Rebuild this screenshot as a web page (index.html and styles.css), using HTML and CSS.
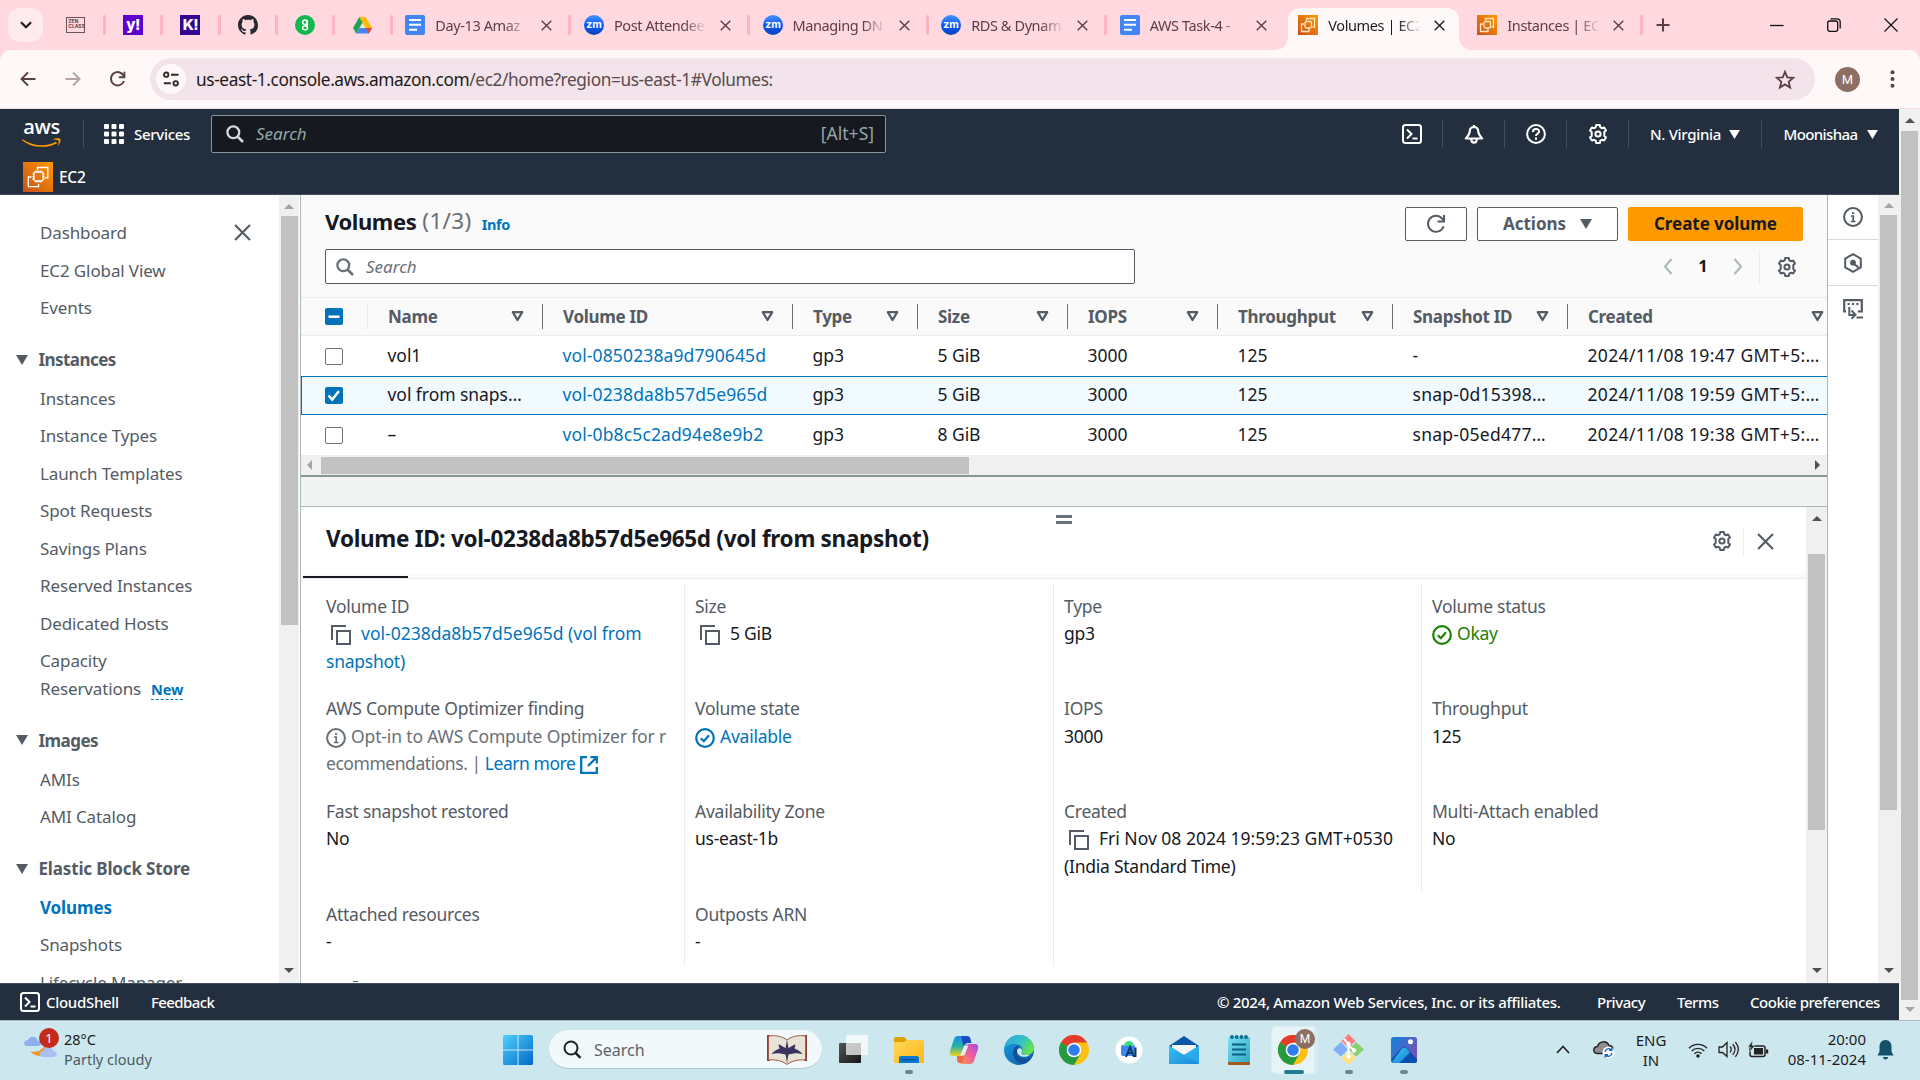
FILE: index.html
```html
<!DOCTYPE html>
<html lang="en">
<head>
<meta charset="utf-8">
<title>Volumes | EC2 | us-east-1</title>
<link rel="stylesheet" href="styles.css">
</head>
<body>
<svg class="defs" width="0" height="0">
  <defs>
    <linearGradient id="gEc2" x1="0" y1="1" x2="1" y2="0"><stop offset="0" stop-color="#c8511b"/><stop offset="1" stop-color="#ff9900"/></linearGradient>
    <linearGradient id="gZm" x1="0" y1="0" x2="0" y2="1"><stop offset="0" stop-color="#4a94ff"/><stop offset=".5" stop-color="#0b5cff"/><stop offset="1" stop-color="#0842b8"/></linearGradient>
    <linearGradient id="gWin" x1="0" y1="0" x2="1" y2="1"><stop offset="0" stop-color="#4fd0fb"/><stop offset="1" stop-color="#0068cc"/></linearGradient>
    <linearGradient id="gFold" x1="0" y1="0" x2="1" y2="1"><stop offset="0" stop-color="#ffd75e"/><stop offset="1" stop-color="#fcb813"/></linearGradient>
    <linearGradient id="gCopA" x1="0" y1="0" x2="0" y2="1"><stop offset="0" stop-color="#1a8fe8"/><stop offset=".5" stop-color="#22b0a8"/><stop offset="1" stop-color="#f2d31b"/></linearGradient>
    <linearGradient id="gCopB" x1="1" y1="0" x2="0" y2="1"><stop offset="0" stop-color="#a349e8"/><stop offset=".5" stop-color="#f0609a"/><stop offset="1" stop-color="#fb9a4a"/></linearGradient>
    <linearGradient id="gEdgeA" x1="0" y1="0" x2="1" y2=".5"><stop offset="0" stop-color="#2aa4dc"/><stop offset=".6" stop-color="#35c1c4"/><stop offset="1" stop-color="#66e24e"/></linearGradient>
    <linearGradient id="gEdgeB" x1="0" y1="0" x2="1" y2="1"><stop offset="0" stop-color="#1b9de2"/><stop offset="1" stop-color="#0c59a4"/></linearGradient>
    <linearGradient id="gMail" x1="0" y1="0" x2="1" y2="1"><stop offset="0" stop-color="#35c3f2"/><stop offset="1" stop-color="#1a86d8"/></linearGradient>
    <linearGradient id="gPad" x1="0" y1="0" x2="1" y2="1"><stop offset="0" stop-color="#7be0f2"/><stop offset="1" stop-color="#2fa9c9"/></linearGradient>
    <linearGradient id="gPhoto" x1="0" y1="0" x2="1" y2=".6"><stop offset="0" stop-color="#0f84dc"/><stop offset="1" stop-color="#7352b8"/></linearGradient>
    <linearGradient id="gHill" x1="0" y1="0" x2="1" y2="1"><stop offset="0" stop-color="#3fd0f5"/><stop offset="1" stop-color="#1279d4"/></linearGradient>
    <linearGradient id="gTask" x1="0" y1="0" x2="1" y2="1"><stop offset="0" stop-color="#555"/><stop offset="1" stop-color="#161616"/></linearGradient>
  </defs>
  <symbol id="close" viewBox="0 0 16 16"><path d="M1 1l14 14M15 1L1 15" fill="none" stroke="currentColor" stroke-width="2"/></symbol>
  <symbol id="ec2" viewBox="0 0 30 30"><path d="M0 0h30v30H0z" fill="url(#gEc2)"/><g fill="none" stroke="#fff" stroke-width="1.300"><path d="M14.500 8V5.500h10.300v10.300h-3M8.500 15H5.300v9.700h10.300V22"/><rect x="11" y="10" width="9" height="9" rx="1.500"/><path d="M13 8.500V10M15.500 8.500V10M18 8.500V10M13 19V20.500M15.500 19V20.500M18 19V20.500M9.500 12.200H11M9.500 14.700H11M9.500 17H11M20 12.200H21.500M20 14.700H21.500M20 17H21.500"/></g></symbol>
  <symbol id="ec2s" viewBox="0 0 20 20"><path d="M0 0h20v20H0z" fill="url(#gEc2)"/><g fill="none" stroke="#ffe6c7" stroke-width="1.300"><path d="M8.500 5.500V3.500h8v8.500h-2M6 9H3.500v7.500h7.500V14"/><rect x="7" y="6.500" width="6.500" height="6.500" rx="1.500"/></g></symbol>
  <symbol id="docs" viewBox="0 0 20 20"><rect width="20" height="20" rx="2" fill="#4285f4"/><path d="M4 5h12M4 9.800h12M4 14.800h8" stroke="#fff" stroke-width="1.900"/></symbol>
  <symbol id="zm" viewBox="0 0 20 20"><circle cx="10" cy="10" r="10" fill="url(#gZm)"/><text x="10" y="13.300" text-anchor="middle" font-size="10.500" font-weight="700" fill="#fff" font-family="Inter, sans-serif">zm</text></symbol>
  <symbol id="gear" viewBox="0 0 20 20"><g fill="none" stroke="currentColor" stroke-width="2" stroke-linejoin="round"><path d="M8.200 1h3.600l.5 2.300 1.600.9 2.200-.8 1.900 3.100-1.700 1.600v3.800l1.700 1.600-1.900 3.100-2.200-.8-1.600.9-.5 2.300H8.200l-.5-2.300-1.600-.9-2.200.8L2 13.500l1.700-1.600V8.100L2 6.500l1.900-3.100 2.200.8 1.600-.9z"/><circle cx="10" cy="10" r="2.600"/></g></symbol>
  <symbol id="shell" viewBox="0 0 20 20"><rect x="1" y="1" width="18" height="18" rx="2.500" fill="none" stroke="currentColor" stroke-width="2"/><path d="M5 5.500l4.500 4.500L5 14.500M10.500 14.500h5" fill="none" stroke="currentColor" stroke-width="2"/></symbol>
  <symbol id="search" viewBox="0 0 18 18"><circle cx="7.300" cy="7.300" r="5.900" fill="none" stroke="currentColor" stroke-width="2.300"/><path d="M11.500 11.500l5.500 5.500" stroke="currentColor" stroke-width="2.500"/></symbol>
  <symbol id="copy" viewBox="0 0 20 20"><path d="M1 15V1h14" fill="none" stroke="currentColor" stroke-width="2"/><rect x="6" y="6" width="13" height="13" fill="none" stroke="currentColor" stroke-width="2"/></symbol>
  <symbol id="okc" viewBox="0 0 20 20"><circle cx="10" cy="10" r="8.800" fill="none" stroke="currentColor" stroke-width="2.200"/><path d="M5.800 10.200l3 3 5.200-5.900" fill="none" stroke="currentColor" stroke-width="2.200"/></symbol>
  <symbol id="info" viewBox="0 0 20 20"><circle cx="10" cy="10" r="8.900" fill="none" stroke="currentColor" stroke-width="2"/><path d="M8 9h2.200v5.500M7.800 14.500h4.700M9 6.200h2.200" fill="none" stroke="currentColor" stroke-width="1.700"/></symbol>
  <symbol id="sort" viewBox="0 0 13 11"><path d="M1.800 1.200h9.400L6.500 9z" fill="none" stroke="currentColor" stroke-width="2.300" stroke-linejoin="round"/></symbol>
  <symbol id="down" viewBox="0 0 12 10"><path d="M0 0h12L6 10z" fill="currentColor"/></symbol>
  <symbol id="reload" viewBox="0 0 20 20"><path d="M17.600 12.200A8 8 0 1 1 16 4.500L17.500 6" fill="none" stroke="currentColor" stroke-width="2"/><path d="M18 1v6.500h-6.500" fill="none" stroke="currentColor" stroke-width="2"/></symbol>
  <symbol id="chrome" viewBox="0 0 30 30"><circle cx="15" cy="15" r="15" fill="#fbc116"/><path d="M15 15L2 7.500A15 15 0 0 1 28 7.500H15z" fill="#e33b2e"/><path d="M2 7.500A15 15 0 0 0 15 30l6.500-11.200L15 15z" fill="#249a41"/><circle cx="15" cy="15" r="7.300" fill="#fff"/><circle cx="15" cy="15" r="5.800" fill="#2f7cf0"/></symbol>
</svg>

<header class="tabstrip">
  <div class="tabmenu"><svg width="12" height="8" viewBox="0 0 12 8"><path d="M1 1.200l5 5 5-5" fill="none" stroke="#1f1a1b" stroke-width="2.200"/></svg></div>
  <div class="pin"><div class="zen">ZEN<br>CLASS</div></div>
  <div class="pin"><div class="fav yahoo">y!</div></div>
  <div class="pin"><div class="fav kahoot">K!</div></div>
  <div class="pin"><svg width="20" height="20" viewBox="0 0 16 16"><path fill="#24292f" d="M8 0C3.580 0 0 3.580 0 8c0 3.540 2.290 6.530 5.470 7.590.4.070.55-.17.55-.38 0-.19-.01-.82-.01-1.490-2.010.37-2.530-.49-2.690-.94-.09-.23-.48-.94-.82-1.130-.28-.15-.68-.52-.01-.53.63-.01 1.080.58 1.230.82.72 1.210 1.870.87 2.330.66.070-.52.28-.87.51-1.070-1.780-.2-3.640-.89-3.640-3.950 0-.87.31-1.590.82-2.150-.08-.2-.36-1.020.080-2.120 0 0 .67-.21 2.200.82.640-.18 1.320-.27 2-.27s1.360.09 2 .27c1.530-1.040 2.200-.82 2.200-.82.44 1.100.16 1.920.080 2.120.51.56.82 1.270.82 2.150 0 3.070-1.870 3.750-3.650 3.950.29.25.54.73.54 1.480 0 1.070-.01 1.930-.01 2.200 0 .21.15.46.55.38A8 8 0 0 0 16 8c0-4.420-3.580-8-8-8z"/></svg></div>
  <div class="pin"><svg width="20" height="20" viewBox="0 0 20 20"><circle cx="10" cy="10" r="10" fill="#12b84e"/><g fill="none" stroke="#fff" stroke-width="1.500"><circle cx="10" cy="7.300" r="2.300"/><path d="M12.300 5v5.500c-2 .3-4.800.3-4.800 2.500s5 2.300 5 0c0-1-.8-1.600-1.600-1.800"/></g></svg></div>
  <div class="pin"><svg width="19" height="17" viewBox="0 0 19 17"><path d="M6.300 0h6.400L19 11h-6.300z" fill="#fbbc04"/><path d="M6.300 0L0 11l3.200 5.600L9.500 5.500z" fill="#25a352"/><path d="M3.200 16.600h12.600L19 11H6.400z" fill="#4486f5"/><path d="M15.800 16.600L19 11h-6.300z" fill="#ea4335"/></svg></div>
  <div class="tab"><svg class="fi"><use href="#docs"/></svg><span class="tt">Day-13 Amaz</span><svg class="tx"><use href="#close"/></svg></div>
  <div class="tab"><svg class="fi"><use href="#zm"/></svg><span class="tt">Post Attendee</span><svg class="tx"><use href="#close"/></svg></div>
  <div class="tab"><svg class="fi"><use href="#zm"/></svg><span class="tt">Managing DN</span><svg class="tx"><use href="#close"/></svg></div>
  <div class="tab"><svg class="fi"><use href="#zm"/></svg><span class="tt">RDS &amp; Dynam</span><svg class="tx"><use href="#close"/></svg></div>
  <div class="tab nosep"><svg class="fi"><use href="#docs"/></svg><span class="tt">AWS Task-4 -</span><svg class="tx"><use href="#close"/></svg></div>
  <div class="tab nosep active"><svg class="fi"><use href="#ec2s"/></svg><span class="tt">Volumes | EC2</span><svg class="tx"><use href="#close"/></svg></div>
  <div class="tab"><svg class="fi"><use href="#ec2s"/></svg><span class="tt">Instances | EC</span><svg class="tx"><use href="#close"/></svg></div>
  <svg class="plus" width="14" height="14" viewBox="0 0 14 14"><path d="M7 .5v13M.5 7h13" stroke="#5b3f46" stroke-width="2"/></svg>
  <div class="winctl">
    <svg width="14" height="14" viewBox="0 0 14 14"><path d="M0 7.500h13.500" stroke="#111" stroke-width="1.300"/></svg>
    <svg width="14" height="14" viewBox="0 0 14 14"><g fill="none" stroke="#111" stroke-width="1.300"><rect x=".7" y="3" width="10" height="10.300" rx="2"/><path d="M3.500.8h6.500a3.200 3.200 0 0 1 3.200 3.200v6.500"/></g></svg>
    <svg width="14" height="14" viewBox="0 0 14 14"><path d="M.5.5l13 13M13.500.5l-13 13" stroke="#111" stroke-width="1.200"/></svg>
  </div>
</header>

<div class="toolbar-bg"><div class="toolbar">
  <svg width="16" height="16" viewBox="0 0 16 16"><path d="M15.500 8H2M8 1.500L1.500 8 8 14.500" fill="none" stroke="#5b3f46" stroke-width="1.900"/></svg>
  <svg width="16" height="16" viewBox="0 0 16 16"><path d="M.5 8H14M8 1.500L14.500 8 8 14.500" fill="none" stroke="#b3a3a7" stroke-width="1.900"/></svg>
  <svg width="16" height="16" viewBox="0 0 16 16"><path d="M14 10A6.700 6.700 0 1 1 13.800 5" fill="none" stroke="#5b3f46" stroke-width="1.900"/><path d="M14.400.7v5.600H8.800" fill="none" stroke="#5b3f46" stroke-width="1.900"/></svg>
  <div class="omni">
    <div class="site"><svg width="16" height="16" viewBox="0 0 16 16"><g fill="none" stroke="#33272a" stroke-width="1.900"><circle cx="3.200" cy="3.700" r="2.200"/><path d="M8 3.700h7.500M.8 12.300h7"/><circle cx="12.700" cy="12.300" r="2.200"/></g></svg></div>
    <span class="url"><b>us-east-1.console.aws.amazon.com</b>/ec2/home?region=us-east-1#Volumes:</span>
    <svg class="star" width="20" height="19" viewBox="0 0 20 19"><path d="M10 1.800l2.300 5.500 5.900.5-4.500 3.900 1.400 5.800-5.100-3.100-5.100 3.100 1.400-5.800L1.800 7.800l5.900-.5z" fill="none" stroke="#5b3f46" stroke-width="1.800"/></svg>
  </div>
  <div class="avatar">M</div>
  <svg width="5" height="18" viewBox="0 0 5 18"><g fill="#5b3f46"><circle cx="2.500" cy="2.300" r="2"/><circle cx="2.500" cy="9" r="2"/><circle cx="2.500" cy="15.700" r="2"/></g></svg>
</div></div>

<div class="viewport">
<div class="console">
  <nav class="aws">
    <div class="row1">
      <div class="logo"><span>aws</span><svg width="39" height="9" viewBox="0 0 39 9"><path d="M.5 1.200C11 8.500 25 9 34 3.800l1 1.400C26 10.500 9 10.500 0 1.900z" fill="#f90"/><path d="M30.500 1.600C33 0 37 0 38.300.8c.8 1.500-.3 5.400-2.700 7.200.6-2 1.600-4.200.9-5.500-1-.8-4-.6-6-.9z" fill="#f90"/></svg></div>
      <i class="vd v1"></i>
      <svg width="20" height="20" viewBox="0 0 20 20" fill="#fff"><rect width="5" height="5" rx="1"/><rect x="7.500" width="5" height="5" rx="1"/><rect x="15" width="5" height="5" rx="1"/><rect y="7.500" width="5" height="5" rx="1"/><rect x="7.500" y="7.500" width="5" height="5" rx="1"/><rect x="15" y="7.500" width="5" height="5" rx="1"/><rect y="15" width="5" height="5" rx="1"/><rect x="7.500" y="15" width="5" height="5" rx="1"/><rect x="15" y="15" width="5" height="5" rx="1"/></svg>
      <span class="nt services">Services</span>
      <div class="nsearch"><svg width="18" height="18"><use href="#search"/></svg><em>Search</em><span>[Alt+S]</span></div>
      <div class="nright">
        <div class="cell"><svg width="20" height="20"><use href="#shell"/></svg></div>
        <div class="cell"><svg width="20" height="20" viewBox="0 0 20 20"><path d="M10 1v2M10 2.800a4.300 4.300 0 0 0-4.200 4.300c0 3-2.200 5.400-4 7.400h16.400c-1.800-2-4-4.400-4-7.400A4.300 4.300 0 0 0 10 2.800zM7.300 15.500c0 4.200 5.400 4.200 5.400 0" fill="none" stroke="#fff" stroke-width="2.200" stroke-linejoin="round"/></svg></div>
        <div class="cell"><svg width="20" height="20" viewBox="0 0 20 20"><circle cx="10" cy="10" r="8.900" fill="none" stroke="#fff" stroke-width="2"/><path d="M6.900 7.900c0-4 6.200-3.900 6.200-.4 0 2.200-3.100 2-3.100 4.500M10 13.500v2.200" fill="none" stroke="#fff" stroke-width="2"/></svg></div>
        <div class="cell"><svg width="20" height="20"><use href="#gear"/></svg></div>
        <div class="cell region"><span class="nt t-reg">N. Virginia</span><svg width="11" height="9"><use href="#down"/></svg></div>
        <div class="cell user"><span class="nt t-usr">Moonishaa</span><svg width="11" height="9"><use href="#down"/></svg></div>
      </div>
    </div>
    <div class="row2"><svg width="30" height="30"><use href="#ec2"/></svg><span class="nt t-ec2">EC2</span></div>
  </nav>

  <div class="body">
    <aside class="side">
      <div class="links">
        <div class="lk"><span>Dashboard</span><svg class="sclose" width="17" height="17"><use href="#close"/></svg></div>
        <div class="lk">EC2 Global View</div>
        <div class="lk">Events</div>
        <div class="hd short"><svg width="12" height="10"><use href="#down"/></svg><span>Instances</span></div>
        <div class="lk">Instances</div>
        <div class="lk">Instance Types</div>
        <div class="lk">Launch Templates</div>
        <div class="lk">Spot Requests</div>
        <div class="lk">Savings Plans</div>
        <div class="lk">Reserved Instances</div>
        <div class="lk">Dedicated Hosts</div>
        <div class="lk two"><span>Capacity<br>Reservations</span><b class="new">New</b></div>
        <div class="hd short"><svg width="12" height="10"><use href="#down"/></svg><span>Images</span></div>
        <div class="lk">AMIs</div>
        <div class="lk">AMI Catalog</div>
        <div class="hd"><svg width="12" height="10"><use href="#down"/></svg><span>Elastic Block Store</span></div>
        <div class="lk on">Volumes</div>
        <div class="lk">Snapshots</div>
        <div class="lk">Lifecycle Manager</div>
      </div>
      <div class="sb sb-side"><i class="up off"></i><b></b><i class="dn"></i></div>
    </aside>

    <main class="main">
      <section class="list">
        <div class="lhead">
          <h1>Volumes</h1><span class="cnt">(1/3)</span><span class="inf">Info</span>
          <div class="btns">
            <div class="btn ref"><svg width="20" height="20"><use href="#reload"/></svg></div>
            <div class="btn act"><span>Actions</span><svg width="12" height="10"><use href="#down"/></svg></div>
            <div class="btn create"><span>Create volume</span></div>
          </div>
        </div>
        <div class="lfilter">
          <div class="filter"><svg width="18" height="18"><use href="#search"/></svg><em>Search</em></div>
          <div class="pager">
            <svg width="10" height="17" viewBox="0 0 10 17"><path d="M8.500 1L2 8.500 8.500 16" fill="none" stroke="#aab7b8" stroke-width="2"/></svg>
            <b>1</b>
            <svg width="10" height="17" viewBox="0 0 10 17"><path d="M1.500 1L8 8.500 1.500 16" fill="none" stroke="#aab7b8" stroke-width="2"/></svg>
            <i></i>
            <svg class="pg" width="20" height="20"><use href="#gear"/></svg>
          </div>
        </div>
        <div class="tr th">
          <div class="ck"><span class="box full"><svg width="18" height="17" viewBox="0 0 18 17"><path d="M3.500 8.700h11" stroke="#fff" stroke-width="2.500"/></svg></span></div>
          <div class="c"><span>Name</span><svg width="13" height="11"><use href="#sort"/></svg></div>
          <div class="c"><span>Volume ID</span><svg width="13" height="11"><use href="#sort"/></svg></div>
          <div class="c"><span>Type</span><svg width="13" height="11"><use href="#sort"/></svg></div>
          <div class="c"><span>Size</span><svg width="13" height="11"><use href="#sort"/></svg></div>
          <div class="c"><span>IOPS</span><svg width="13" height="11"><use href="#sort"/></svg></div>
          <div class="c"><span>Throughput</span><svg width="13" height="11"><use href="#sort"/></svg></div>
          <div class="c"><span>Snapshot ID</span><svg width="13" height="11"><use href="#sort"/></svg></div>
          <div class="c"><span>Created</span><svg width="13" height="11"><use href="#sort"/></svg></div>
        </div>
        <div class="tr"><div class="ck"><span class="box"></span></div><div class="d">vol1</div><div class="d a">vol-0850238a9d790645d</div><div class="d">gp3</div><div class="d">5 GiB</div><div class="d">3000</div><div class="d">125</div><div class="d">-</div><div class="d date">2024/11/08 19:47 GMT+5:…</div></div>
        <div class="tr sel"><div class="ck"><span class="box full"><svg width="18" height="17" viewBox="0 0 18 17"><path d="M3.500 8.500l3.700 4L14 4" fill="none" stroke="#fff" stroke-width="2.500"/></svg></span></div><div class="d">vol from snaps…</div><div class="d a">vol-0238da8b57d5e965d</div><div class="d">gp3</div><div class="d">5 GiB</div><div class="d">3000</div><div class="d">125</div><div class="d snap">snap-0d15398…</div><div class="d date">2024/11/08 19:59 GMT+5:…</div></div>
        <div class="tr"><div class="ck"><span class="box"></span></div><div class="d">–</div><div class="d a">vol-0b8c5c2ad94e8e9b2</div><div class="d">gp3</div><div class="d">8 GiB</div><div class="d">3000</div><div class="d">125</div><div class="d snap">snap-05ed477…</div><div class="d date">2024/11/08 19:38 GMT+5:…</div></div>
        <div class="hsb"><i class="lf"></i><b></b><i class="rt"></i></div>
      </section>
      <div class="gap"></div>
      <section class="split">
        <div class="scontent">
          <div class="shead">
            <div class="handle"></div>
            <h2>Volume ID: vol-0238da8b57d5e965d (vol from snapshot)</h2>
            <div class="sact"><svg width="20" height="20"><use href="#gear"/></svg><i></i><svg width="17" height="17"><use href="#close"/></svg></div>
          </div>
          <div class="tabsline"><i></i></div>
          <div class="cols">
            <div class="col">
              <div class="f"><label>Volume ID</label><p class="a"><svg class="cp" width="20" height="20"><use href="#copy"/></svg><span class="wide">vol-0238da8b57d5e965d (vol from</span><br>snapshot)</p></div>
              <div class="f"><label>AWS Compute Optimizer finding</label><p class="g"><svg class="ic" width="20" height="20"><use href="#info"/></svg><span class="mid">Opt-in to AWS Compute Optimizer for r</span><br><span class="tight">ecommendations. | </span><span class="a tight">Learn more</span><svg class="ext" width="18" height="18" viewBox="0 0 18 18"><path d="M7 1.200H1.200v15.600h15.600V11M10.500 1.200h6.300v6.300M16.500 1.500L8 10" fill="none" stroke="currentColor" stroke-width="2.300"/></svg></p></div>
              <div class="f"><label>Fast snapshot restored</label><p>No</p></div>
              <div class="f last"><label>Attached resources</label><p>-</p></div>
            </div>
            <div class="col">
              <div class="f"><label>Size</label><p><svg class="cp" width="20" height="20"><use href="#copy"/></svg>5 GiB</p></div>
              <div class="f"><label>Volume state</label><p class="a"><svg class="ic" width="20" height="20"><use href="#okc"/></svg>Available</p></div>
              <div class="f"><label>Availability Zone</label><p>us-east-1b</p></div>
              <div class="f last"><label>Outposts ARN</label><p>-</p></div>
            </div>
            <div class="col">
              <div class="f"><label>Type</label><p>gp3</p></div>
              <div class="f"><label>IOPS</label><p>3000</p></div>
              <div class="f last"><label>Created</label><p><svg class="cp" width="20" height="20"><use href="#copy"/></svg><span class="wide">Fri Nov 08 2024 19:59:23 GMT+0530</span><br>(India Standard Time)</p></div>
            </div>
            <div class="col short">
              <div class="f"><label>Volume status</label><p class="ok"><svg class="ic" width="20" height="20"><use href="#okc"/></svg>Okay</p></div>
              <div class="f"><label>Throughput</label><p>125</p></div>
              <div class="f last3"><label>Multi-Attach enabled</label><p>No</p></div>
            </div>
          </div>
          <div class="cut"></div>
        </div>
        <div class="sb sb-split"><i class="up"></i><b></b><i class="dn"></i></div>
      </section>
    </main>

    <div class="rail">
      <div><svg width="20" height="20"><use href="#info"/></svg></div>
      <div><svg width="20" height="20" viewBox="0 0 20 20"><path d="M10 1.200l7.800 4.400v8.800L10 18.800l-7.800-4.400V5.600z" fill="none" stroke="currentColor" stroke-width="2"/><circle cx="10" cy="9.700" r="2.900" fill="currentColor"/><path d="M10.500 10.500l5 4" stroke="currentColor" stroke-width="2.200"/></svg></div>
      <div><svg width="20" height="20" viewBox="0 0 20 20"><path d="M3 12.500H1.200V1.200h17.600v11.300h-4" fill="none" stroke="currentColor" stroke-width="2.200"/><path d="M4.500 5h2.200M8.900 5h2.200M13.300 5h2.200M6.300 8v8h5.500M8.500 11.500l4 4.200-4 4.200M13.500 18.500H20" fill="none" stroke="currentColor" stroke-width="2"/></svg></div>
    </div>
    <div class="sb sb-rail"><i class="up off"></i><b></b><i class="dn"></i></div>
  </div>

  <footer class="foot">
    <svg width="20" height="20"><use href="#shell"/></svg><span class="nt f1">CloudShell</span><span class="nt f2">Feedback</span>
    <span class="nt f3">© 2024, Amazon Web Services, Inc. or its affiliates.</span><span class="nt f4">Privacy</span><span class="nt f5">Terms</span><span class="nt f6">Cookie preferences</span>
  </footer>
</div>
<div class="sb sb-page"><i class="up"></i><b></b><i class="dn off"></i></div>
</div>

<div class="taskbar">
  <div class="weather">
    <svg width="36" height="36" viewBox="0 0 36 36"><path d="M22 9c6 4 7 9 3 14-5 6-14 5-19-1 7 3 17-2 16-13z" fill="#f29422"/><path d="M3 17c-4 0-4-6 1-6 2-5 9-4 10 1 4 0 4 5 0 5z" fill="#8eb0ee"/><path d="M17 34c-5 0-4-6 0-6 2-6 9-5 10 0 5 0 5 6 0 6z" fill="#a9c0f2" transform="translate(2 -6)"/></svg>
    <span class="badge">1</span>
    <div><span class="w1">28°C</span><span class="w2">Partly cloudy</span></div>
  </div>
  <div class="apps">
    <div class="app start"><svg width="30" height="30" viewBox="0 0 30 30"><path d="M0 1.500Q0 0 1.500 0H14.500V14.500H0zM15.500 0H28.500Q30 0 30 1.500V14.500H15.500zM0 15.500H14.500V30H1.500Q0 30 0 28.500zM15.500 15.500H30V28.500Q30 30 28.500 30H15.500z" fill="url(#gWin)"/></svg></div>
    <div class="tsearch"><svg width="19" height="19" viewBox="0 0 19 19"><circle cx="8" cy="8" r="6.500" fill="none" stroke="#222" stroke-width="2"/><path d="M12.500 12.800l5 5" stroke="#222" stroke-width="2.400"/></svg><span>Search</span>
      <svg class="book" width="40" height="31" viewBox="0 0 40 31"><path d="M0 1h3v26H0zM37 1h3v26h-3z" fill="#8c3f35"/><path d="M1.500 2C8 1 15 2 20 6c5-4 12-5 18.500-4v24c-7-.5-13 .5-18.500 4.500C14.500 26.500 8.500 25.500 1.500 26z" fill="#e9e2d6" stroke="#9a5b4c" stroke-width="1"/><path d="M20 6v23" stroke="#9a8f80"/><path d="M20 7l1.500 7c3-1 5-4 7-3.500l-1 4c3 1 6 3 8 5.500-4-1-7-1-9-.500l-5 1-1.500 7-1.500-7-5-1c-2-.500-5-.500-9 .500 2-2.500 5-4.500 8-5.500l-1-4c2-.500 4 2.500 7 3.500z" fill="#39345f"/></svg>
    </div>
    <div class="app"><svg width="30" height="30" viewBox="0 0 30 30"><rect x="0" y="8" width="22" height="20" rx="1" fill="url(#gTask)"/><rect x="7" y="0" width="22" height="20" rx="1" fill="#fff" fill-opacity=".72"/></svg></div>
    <div class="app run"><svg width="30" height="30" viewBox="0 0 30 30"><path d="M0 4q0-2 2-2h8l3 3v6H0z" fill="#e0a000"/><path d="M0 8q0-1 2-1h8l3-2h15q2 0 2 2v21H0z" fill="url(#gFold)"/><path d="M5 28v-5q0-2 2-2h16q2 0 2 2v5z" fill="#0b78d0"/><path d="M8 24.800h14" stroke="#064b86" stroke-width="1.200"/></svg></div>
    <div class="app"><svg width="30" height="30" viewBox="0 0 30 30"><path d="M14 19l5-16q-1-2-3-2H9Q6 1 5 4L1 16q-1 5 3 5h6q3 0 4-2z" fill="url(#gCopA)"/><path d="M12 1h6q3 0 3.500 3l1 4h-4q-3 0-4 3z" fill="#1d49c8"/><path d="M16 11l-5 16q1 2 3 2h7q3 0 4-3l4-12q1-5-3-5h-6q-3 0-4 2z" fill="url(#gCopB)"/><path d="M8 21h4q3 0 4-2l-3 9q-4 1-5-3z" fill="#f06a40"/><path d="M15.300 10.500h4l-4 10h-4z" fill="#e4f0f4"/></svg></div>
    <div class="app"><svg width="30" height="30" viewBox="0 0 30 30"><circle cx="15" cy="15" r="15" fill="url(#gEdgeB)"/><path d="M.5 13C2 4 9 0 15 0c9 0 15 7 15 13 0 5-4 7-8 7-4.500 0-5-2-4-3.500C20 13 16 9 11 9 6 9 2 11 .5 13z" fill="url(#gEdgeA)"/><path d="M10 14c-3 7 2 14 9 15 4-1 7-4 9-7-5 3-16 3-15-6 0-2 1-4 3-5-3-1-5 1-6 3z" fill="#114f98"/><path d="M13 16c0-3 4-4 5-1 .500 1-1 2-.500 3.500 1 2 6 2 9 .500-4 5-13 3-13.500-3z" fill="#cde7ee"/></svg></div>
    <div class="app"><svg width="30" height="30"><use href="#chrome"/></svg></div>
    <div class="app"><svg width="28" height="28" viewBox="0 0 28 28"><circle cx="14" cy="14" r="13.500" fill="#fff"/><rect x="6" y="9" width="14" height="11" rx="2" fill="#4285f4"/><path d="M9 10a4.500 4.500 0 0 1 10 0z" fill="#3ddc84"/><path d="M11 21l4-10 4 10M12.500 17h5M20.500 11.500V21" fill="none" stroke="#0b3b5c" stroke-width="2"/></svg></div>
    <div class="app"><svg width="30" height="30" viewBox="0 0 30 30"><path d="M0 11L15 1l15 10v8H0z" fill="#0a56a8"/><path d="M3 10h24v9H3z" fill="#f4f4f4"/><path d="M0 10.500L15 20l15-9.500V29H0z" fill="url(#gMail)"/><path d="M30 11v18L10 17.500l5 2.500z" fill="#2fb4ee" opacity=".6"/></svg></div>
    <div class="app"><svg width="22" height="30" viewBox="0 0 22 30"><path d="M0 26.500h22V29q0 1-1 1H1q-1 0-1-1z" fill="#a5591c"/><rect y="2" width="22" height="25" rx="1.500" fill="url(#gPad)"/><path d="M4 9.500h14M4 14.500h14M4 19.500h14" stroke="#0a5e80" stroke-width="2"/><g fill="#0a6c8c"><circle cx="4" cy="2" r="1.900"/><circle cx="8.700" cy="2" r="1.900"/><circle cx="13.400" cy="2" r="1.900"/><circle cx="18" cy="2" r="1.900"/></g></svg></div>
    <div class="app cur"><svg width="30" height="30"><use href="#chrome"/></svg><span class="mb">M</span></div>
    <div class="app run"><svg width="31" height="31" viewBox="0 0 31 31"><path d="M15.500 0l7 7-7 7-7-7z" fill="#fb7f80"/><path d="M8 8l7 7.500-7 7-8-7z" fill="#80aefb"/><path d="M23 8l8 7.500-8 7-7-7z" fill="#86d06a"/><path d="M15.500 17l7 7-7 7-7-7z" fill="#fde27f"/><path d="M11 5l4.500 5v13M15.500 12l6 4" fill="none" stroke="#fff" stroke-width="2"/><g fill="#fff"><circle cx="15.500" cy="10" r="2.300"/><circle cx="21" cy="16.500" r="2.300"/><circle cx="15.500" cy="22.500" r="2.300"/></g></svg></div>
    <div class="app run"><svg width="26" height="26" viewBox="0 0 26 26"><rect width="26" height="26" rx="2.500" fill="url(#gPhoto)"/><path d="M0 23L10.500 11q2.500-2.500 5 0L26 22v1.500q0 2.500-2.500 2.500H2.500z" fill="#0a4fae"/><path d="M1 25L11 11.500q2.500-2 4.500 0l3.500 4L8.500 26H3z" fill="url(#gHill)"/><circle cx="19.500" cy="4.800" r="2.500" fill="#fff"/></svg></div>
  </div>
  <div class="tray">
    <svg class="chev" width="14" height="9" viewBox="0 0 14 9"><path d="M1 8l6-6.500L13 8" fill="none" stroke="#222" stroke-width="1.700"/></svg>
    <svg class="cloud" width="22" height="19" viewBox="0 0 22 19"><path d="M5 13.500c-5.500 0-5.500-6.500-.5-7C6 1 13.500 0 16 5.500c5 0 5.500 8 0 8z" fill="#8e8e8e" stroke="#222" stroke-width="1.500"/><circle cx="15.500" cy="12.500" r="6" fill="#fff"/><path d="M12 12a3.700 3.700 0 0 1 6.500-2M19 13a3.700 3.700 0 0 1-6.500 2M18.800 7.500v2.800H16M12.200 17.500v-2.800H15" fill="none" stroke="#1668c4" stroke-width="1.400"/></svg>
    <div class="lang">ENG<br>IN</div>
    <svg width="20" height="16" viewBox="0 0 20 16"><g fill="none" stroke="#222" stroke-width="1.400"><path d="M1 6.200a12.500 12.500 0 0 1 18 0M3.700 9a8.800 8.800 0 0 1 12.600 0M6.400 11.700a5 5 0 0 1 7.200 0"/></g><circle cx="10" cy="14" r="1.800" fill="#222"/></svg>
    <svg class="vol" width="21" height="17" viewBox="0 0 21 17"><g fill="none" stroke="#222" stroke-width="1.300"><path d="M1 6h3.500L9 1.500v14L4.500 11.500H1z"/><path d="M12 5.500q2.500 3 0 6M14.700 3.300q4.600 5.200 0 10.400M17.400 1.200q6 7.300 0 14.600"/></g></svg>
    <svg class="bat" width="21" height="17" viewBox="0 0 21 17"><rect x="2" y="5" width="15" height="10.500" rx="2" fill="none" stroke="#222" stroke-width="1.500"/><rect x="6" y="7" width="9" height="6.500" fill="#222"/><path d="M18 8.500h2.200v4H18z" fill="#222"/><path d="M4.500-.5L0 6h3l-1.500 5L7 4.500H4z" fill="#222" stroke="#cde7ee" stroke-width=".5"/></svg>
    <div class="clock">20:00<br>08-11-2024</div>
    <svg class="bell" width="17" height="20" viewBox="0 0 17 20"><path d="M8.500 0c4 0 6 3 6 6.500v5l2 4H.5l2-4v-5C2.500 3 4.500 0 8.500 0zM5.800 17h5.400q-.6 2.500-2.700 2.500T5.800 17z" fill="#15506a"/></svg>
  </div>
</div>
</body>
</html>
```
FILE: styles.css
```css
* { box-sizing: border-box; }
body { margin: 0; width: 1920px; height: 1080px; overflow: hidden; display: flex; flex-direction: column; font-family: "Noto Sans", "Open Sans", sans-serif; background: #fff; }
.defs { position: absolute; }
svg { display: block; flex: none; overflow: visible; }
h1, h2, p { margin: 0; }
span, em, b, div { white-space: nowrap; }

/* browser tab strip */
.tabstrip { height: 50px; flex: none; background: #ffd8e0; display: flex; align-items: center; padding-left: 8px; }
.tabmenu { width: 35px; height: 34px; border-radius: 12px; background: #ffeaee; display: flex; align-items: center; justify-content: center; margin-right: 4px; }
.pin { width: 57.400px; height: 20px; display: flex; align-items: center; justify-content: center; position: relative; }
.pin::after, .tab::after { content: ""; position: absolute; right: -1.500px; top: 0; width: 3px; height: 20px; border-radius: 2px; background: #ffb1c5; }
.zen { width: 19px; height: 16px; border: 1.500px solid #6b5358; font: 700 5px/5px "Inter", sans-serif; color: #5b464b; padding: 1px 0 0 1px; }
.fav { width: 20px; height: 20px; color: #fff; font: 800 15px/19px "Inter", sans-serif; text-align: center; letter-spacing: -.5px; }
.yahoo { background: #5f01d1; }
.kahoot { background: #34058f; }
.tab { width: 178.600px; height: 20px; position: relative; display: flex; align-items: center; padding-left: 14px; }
.tab.nosep::after { display: none; }
.fi { width: 20px; height: 20px; margin-right: 10px; }
.tt { width: 92px; font-size: 14.500px; line-height: 20px; color: #5b3f46; letter-spacing: -.4px; -webkit-mask-image: linear-gradient(90deg, #000 76%, transparent 101%); mask-image: linear-gradient(90deg, #000 76%, transparent 101%); }
.tx { width: 11px; height: 11px; margin-left: 14px; color: #5b3f46; }
.tab.active { width: 171px; height: 42px; margin: 8px 4px 0 4px; padding-left: 10px; padding-bottom: 8px; background: #fff8f8; border-radius: 12px 12px 0 0; }
.tab.active .tt, .tab.active .tx { color: #1f1a1b; }
.tab.active::before, .tab.active::after { content: ""; display: block; position: absolute; bottom: 0; top: auto; width: 12px; height: 12px; border-radius: 0; }
.tab.active::before { left: -12px; background: radial-gradient(circle at 0 0, #ffd8e0 11.500px, #fff8f8 12px); }
.tab.active::after { right: -12px; background: radial-gradient(circle at 100% 0, #ffd8e0 11.500px, #fff8f8 12px); }
.plus { margin-left: 14px; }
.winctl { margin-left: auto; margin-right: 22px; display: flex; gap: 43px; }

/* address bar */
.toolbar-bg { height: 59px; flex: none; background: #ffd8e0; }
.toolbar { height: 59px; background: #fff8f8; border-radius: 11px 11px 0 0; border-bottom: 1px solid #f2dfe3; display: flex; align-items: center; padding: 0 25px 0 20px; }
.toolbar > svg:nth-child(2) { margin-left: 29px; }
.toolbar > svg:nth-child(3) { margin: 0 24px 0 29px; }
.omni { width: 1665px; height: 42px; border-radius: 21px; background: #f2e4ea; display: flex; align-items: center; padding: 0 20px 0 6px; }
.site { width: 30px; height: 30px; border-radius: 50%; background: #fff8f8; display: flex; align-items: center; justify-content: center; }
.url { margin-left: 10px; font-size: 17.300px; letter-spacing: -.400px; color: #594a4e; }
.url b { font-weight: 400; color: #1f1a1b; }
.star { margin-left: auto; }
.avatar { width: 25px; height: 25px; border-radius: 50%; background: #8d6e63; color: #fff; font: 13px/25px "Roboto", sans-serif; text-align: center; margin: 0 30px 0 20px; }

/* page frame */
.viewport { height: 911px; flex: none; display: flex; }
.console { width: 1899px; display: flex; flex-direction: column; }
.nt { color: #fff; font-size: 15px; font-weight: 500; line-height: 20px; letter-spacing: -.300px; }

/* aws navigation */
.aws { height: 86px; flex: none; background: #232f3e; border-bottom: 1px solid #414d5c; padding: 6px 0 0; }
.row1 { height: 38px; display: flex; align-items: center; padding-left: 22px; }
.logo { width: 39px; height: 25px; color: #fff; text-align: center; }
.logo span { display: block; font: 600 20px/16px "Open Sans", sans-serif; letter-spacing: -.3px; height: 16px; margin-top: -3px; }
.logo svg { margin-top: 3px; }
.vd { width: 1px; height: 28px; background: #414d5c; margin: 0 20px 0 22px; }
.services { margin-left: 10px; width: 57px; }
.nsearch { margin-left: 20px; width: 675px; height: 38px; border: 1px solid #879596; border-radius: 2px; background: #16191f; display: flex; align-items: center; padding: 0 11px 0 14px; color: #d5dbdb; }
.nsearch em { margin-left: 12px; margin-top: -1px; color: #95a5a6; font-size: 17px; }
.nsearch span { margin-left: auto; margin-top: -2px; color: #95a5a6; font-size: 17.500px; }
.nright { margin-left: auto; display: flex; align-items: center; color: #fff; }
.cell { height: 28px; width: 62px; border-right: 1px solid #414d5c; display: flex; align-items: center; justify-content: center; }
.cell.region { width: 133px; gap: 8px; }
.cell.user { width: 137px; border: 0; gap: 9px; padding-left: 0; }
.t-usr { letter-spacing: -.600px; }
.row2 { height: 41px; padding: 9px 0 0 23px; display: flex; gap: 6px; }
.row2 .nt { line-height: 30px; font-size: 15.500px; }

/* body */
.body { height: 788px; flex: none; display: flex; color: #545b64; font-size: 17px; }
.side { width: 301px; flex: none; display: flex; border-right: 1px solid #aab7b8; padding-right: 1px; overflow: hidden; }
.links { width: 279px; height: 788px; padding-top: 19px; overflow: hidden; }
.lk { height: 37.500px; line-height: 37.500px; padding-left: 40px; display: flex; align-items: center; letter-spacing: -.120px; }
.sclose { margin-left: auto; margin-right: 28px; }
.lk.two { height: 65px; line-height: 27.500px; align-items: flex-end; padding-bottom: 5px; }
.new { font-size: 14.500px; line-height: 20px; color: #0073bb; border-bottom: 1px dashed #0073bb; margin-left: 10px; margin-bottom: 2px; }
.hd { height: 37.500px; margin: 14.300px 0 1.500px; padding-left: 16px; display: flex; align-items: center; gap: 10.500px; font-weight: 700; letter-spacing: -.150px; }
.hd.short { letter-spacing: -.550px; }
.on { color: #0073bb; font-weight: 700; }

/* scrollbars */
.sb { background: #f0f0f0; width: 21px; display: flex; flex-direction: column; align-items: center; flex: none; }
.sb b { background: #c1c1c1; width: 17px; }
.sb i, .hsb i { width: 0; height: 0; border: 5px solid transparent; flex: none; }
.sb .up { border-top: 0; border-bottom-color: #505050; }
.sb .dn { border-bottom: 0; border-top-color: #505050; margin-top: auto; }
.sb .up.off { border-bottom-color: #a3a3a3; }
.sb .dn.off { border-top-color: #a3a3a3; }
.sb-side { width: 20px; padding: 9px 0 10px; }
.sb-side b { margin-top: 7px; height: 409px; }
.sb-rail { padding: 8px 0 10px; }
.sb-rail b { margin-top: 7px; height: 595px; }
.sb-page { padding: 9px 0 8px; }
.sb-page b { margin-top: 8px; height: 869px; }
.sb-split { padding: 9px 0 10px; }
.sb-split b { margin-top: 33px; height: 276px; }

/* volumes list */
.main { width: 1526px; flex: none; display: flex; flex-direction: column; overflow: hidden; }
.list { height: 282px; flex: none; background: #fafafa; border-bottom: 2px solid #879596; }
.lhead { height: 50px; padding: 12px 24px 0 24px; display: flex; align-items: center; }
h1 { font-size: 22px; line-height: 30px; color: #16191f; margin-top: -10px; letter-spacing: -.4px; }
.cnt { font-size: 22.500px; line-height: 30px; margin: -10px 0 0 6px; color: #687078; letter-spacing: .350px; }
.inf { font-size: 14.500px; font-weight: 700; color: #0073bb; margin: -4px 0 0 10px; letter-spacing: -.400px; }
.btns { margin-left: auto; display: flex; gap: 10px; margin-top: -4px; }
.btn { height: 34px; border: 1px solid #545b64; border-radius: 2px; background: #fff; display: flex; align-items: center; justify-content: center; font-weight: 700; }
.btn span { margin-top: -2px; }
.ref { width: 62px; }
.act { width: 141px; gap: 14px; }
.create { width: 175px; background: #f90; border-color: #f90; color: #16191f; letter-spacing: -.050px; }
.lfilter { height: 52px; padding: 4px 30px 0 24px; display: flex; }
.filter { width: 810px; height: 35px; background: #fff; border: 1px solid #545b64; border-radius: 2px; display: flex; align-items: center; padding-left: 10px; gap: 12px; color: #687078; }
.pager { margin-left: auto; display: flex; align-items: center; height: 35px; }
.pager b { color: #16191f; width: 60px; text-align: center; font-size: 16.500px; margin-top: -2px; }
.pager i { width: 1px; height: 34px; background: #eaeded; margin: 0 17px 0 16px; }
.tr { display: grid; grid-template-columns: 65.500px 175px 250px 125px 150px 150px 175px 175px 260px; height: 40px; background: #fff; color: #16191f; align-items: center; overflow: hidden; }
.th { height: 39px; background: #fafafa; border-top: 1px solid #eaeded; border-bottom: 1px solid #eaeded; color: #545b64; font-weight: 700; }
.sel { height: 39px; background: #f1faff; border: 1px solid #0073bb; border-right: 0; grid-template-columns: 64.500px 175px 250px 125px 150px 150px 175px 175px 260px; }
.ck { padding-left: 23.500px; }
.sel .ck { padding-left: 22.500px; }
.box { display: block; width: 18px; height: 17px; border: 1px solid #687078; border-radius: 2px; background: #fff; }
.box.full { background: #0073bb; border: 0; }
.c { height: 25px; padding: 0 18px 0 20.500px; display: flex; align-items: center; justify-content: space-between; border-left: 1px solid #687078; letter-spacing: -.300px; color: #545b64; }
.c span { margin-top: -1px; }
.c:nth-child(2) { border-color: #eaeded; }
.c:last-child { padding-right: 3px; }
.d { padding: 0 0 3px 21px; font-size: 17.500px; letter-spacing: -.050px; }
.d.a { letter-spacing: .120px; }
.snap { letter-spacing: .270px; }
.date { letter-spacing: .350px; }
.a { color: #0073bb; }
.hsb { height: 20px; background: #f0f0f0; display: flex; align-items: center; padding: 0 7px 0 6px; }
.hsb i.lf { border-left: 0; border-right-color: #a3a3a3; }
.hsb i.rt { border-right: 0; border-left-color: #505050; margin-left: auto; }
.hsb b { width: 648px; height: 17px; background: #c1c1c1; margin-left: 9px; }
.gap { height: 29px; flex: none; background: #f2f3f3; }

/* split panel */
.split { flex: 1; border-top: 1px solid #aab7b8; display: flex; background: #fff; }
.scontent { width: 1505px; height: 476px; overflow: hidden; padding-left: 2px; }
.shead { height: 66px; position: relative; display: flex; align-items: center; padding: 2px 32px 0 23px; }
.handle { position: absolute; left: 753px; top: 8px; width: 16px; height: 9px; border-top: 3px solid #687078; border-bottom: 3px solid #687078; }
h2 { font-size: 22.500px; line-height: 30px; color: #16191f; letter-spacing: -.300px; margin-top: -4px; }
.sact { margin-left: auto; display: flex; align-items: center; }
.sact i { width: 1px; height: 28px; background: #eaeded; margin: 0 13px 0 11px; }
.tabsline { height: 6px; background: #fafafa; border-bottom: 1px solid #eaeded; padding-top: 3px; }
.tabsline i { display: block; width: 105px; height: 2px; background: #16191f; }
.cols { margin-top: 5px; display: grid; grid-template-columns: 381px 369px 368px 1fr; }
.col { padding: 8.500px 0 10.500px 10px; border-left: 1px solid #eaeded; }
.col:first-child { border: 0; padding-left: 23px; }
.col.short { align-self: start; }
.f { height: 82.500px; margin-bottom: 20.200px; font-size: 17.500px; line-height: 27.500px; letter-spacing: -.250px; }
.f label { display: block; }
.f p { color: #16191f; }
.f.last { height: 55px; margin: 0; }
.f.last3 { margin: 0; }
.f p.a { color: #0073bb; }
.f p.g { color: #687078; }
.f .a { color: #0073bb; }
.f p.ok { color: #1d8102; }
.wide { letter-spacing: 0; }
.mid { letter-spacing: -.150px; }
.tight { letter-spacing: -.450px; }
.f svg { display: inline-block; vertical-align: -5px; }
.f .cp { margin: 0 10px 0 5px; color: #545b64; }
.f .ic { margin-right: 5px; }
.f .ext { margin-left: 5px; color: #0073bb; vertical-align: -4px; }
.cut { width: 5px; height: 1px; background: #545b64; margin: 15px 0 0 50px; }

/* right rail */
.rail { width: 51px; flex: none; border-left: 1px solid #aab7b8; background: #fff; }
.rail div { height: 46px; display: flex; align-items: center; justify-content: center; border-bottom: 1px solid #d5dbdb; }
.rail div:first-child { height: 45px; }
.rail div:last-child { border: 0; }

/* footer */
.foot { height: 37px; flex: none; background: #232f3e; border-top: 1px solid #414d5c; color: #fff; display: flex; align-items: center; padding: 0 20px 1px 20px; }
.f1 { margin-left: 6px; width: 74px; }
.f2 { margin-left: 31px; letter-spacing: -.600px; }
.f3 { margin-left: auto; width: 343px; }
.f4 { margin-left: 37px; width: 50px; letter-spacing: -.450px; }
.f5 { margin-left: 30px; width: 42px; letter-spacing: -.450px; }
.f6 { margin-left: 31px; width: 129px; letter-spacing: -.450px; }

/* taskbar */
.taskbar { height: 60px; flex: none; background: #cde7ee; border-top: 1px solid #a9b7bf; display: flex; position: relative; color: #1c1c1c; font-size: 15px; line-height: 20px; }
.weather { width: 491px; padding: 8px 0 0 24px; display: flex; position: relative; }
.weather div { margin: 0 0 0 4px; font-size: 14.500px; }
.weather div span { display: block; }
.w2 { color: #4b5b62; }
.badge { position: absolute; left: 39px; top: 7px; width: 20px; height: 20px; border-radius: 50%; background: #c42b1c; color: #fff; font-size: 13px; line-height: 20px; text-align: center; }
.apps { display: flex; align-items: center; height: 60px; padding-bottom: 3px; }
.app { width: 55px; height: 48px; display: flex; align-items: center; justify-content: center; position: relative; }
.start { margin-right: 3px; margin-left: -1px; }
.run::after { content: ""; position: absolute; bottom: 0; left: 24px; width: 8px; height: 4px; border-radius: 2px; background: #72858a; }
.tsearch { width: 273px; height: 39px; margin-left: 1px; border-radius: 20px; background: #f1f9fb; border-bottom: 1px solid #aac6cf; display: flex; align-items: center; padding: 0 15px 0 14px; margin-right: 4px; font-size: 16px; color: #5a6468; }
.tsearch span { margin-left: 12px; margin-top: 2px; }
.book { margin-left: auto; }
.cur::before { content: ""; position: absolute; inset: 0 3px 0 5px; border-radius: 5px; background: #e6f3f7; border: 1px solid #dcecf1; border-right: 4px solid #d6eaf0; }
.cur svg { position: relative; left: -1px; }
.cur::after { content: ""; position: absolute; bottom: 0; left: 18px; width: 20px; height: 4px; border-radius: 2px; background: #217d8e; }
.mb { position: absolute; left: 29px; top: 3px; width: 20px; height: 20px; border-radius: 50%; background: #8d6e63; color: #fff; font: 12px/20px "Roboto", sans-serif; text-align: center; }
.tray { margin-left: auto; display: flex; align-items: center; height: 59px; padding: 0 26px 2px 0; }
.cloud { margin-left: 23px; }
.lang { text-align: center; width: 32px; margin: 0 21px 0 20px; }
.vol { margin-left: 10px; }
.bat { margin-left: 9px; }
.clock { text-align: right; width: 84px; margin: -1px 11px 0 13px; }
```
